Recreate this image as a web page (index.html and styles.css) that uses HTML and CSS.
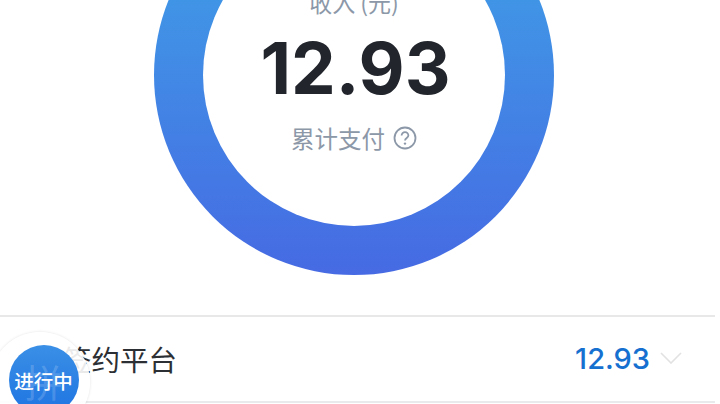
FILE: index.html
```html
<!DOCTYPE html>
<html lang="zh-CN">
<head>
    <meta charset="UTF-8">
    <title>收入</title>
    <link rel="stylesheet" href="styles.css">
</head>
<body>
    <div class="page">
        <section class="summary">
            <div class="ring">
                <div class="ring-inner">
                    <p class="ring-label">收入 (元)</p>
                    <p class="ring-value">12.93</p>
                    <p class="ring-note">累计支付
                        <svg class="help" viewBox="0 0 24 24" width="24" height="24">
                            <circle cx="12" cy="12" r="10.5" fill="none" stroke="#8c98a8" stroke-width="1.8"/>
                            <path d="M8.6 9.6a3.4 3.4 0 0 1 6.8 0c0 2.4-3.4 2.5-3.4 5" fill="none" stroke="#8c98a8" stroke-width="1.8"/>
                            <circle cx="12" cy="17.6" r="1.2" fill="#8c98a8"/>
                        </svg>
                    </p>
                </div>
            </div>
        </section>
        <div class="row">
            <span class="row-title">签约平台</span>
            <span class="row-value">12.93</span>
            <svg class="chevron" viewBox="0 0 22 12" width="22" height="12">
                <path d="M1 1l10 10L21 1" fill="none" stroke="#e2e2e2" stroke-width="1.6"/>
            </svg>
        </div>
    </div>
    <div class="float-badge">
        <div class="badge-circle">
            <span class="badge-mark">拼</span>
            <span class="badge-text">进行中</span>
        </div>
    </div>
</body>
</html>
```

FILE: styles.css
```css
html, body {
    margin: 0;
    padding: 0;
    height: 404px;
    overflow: hidden;
    background-color: #fff;
}

body {
    font-family: "Inter", "Roboto", "Noto Sans CJK SC", sans-serif;
    position: relative;
}

p {
    margin: 0;
}

.page {
    width: 715px;
}

.summary {
    display: flex;
    justify-content: center;
    height: 440px;
    margin-top: -125px;
}

.ring {
    width: 400px;
    height: 400px;
    margin-left: -7px;
    padding: 49px;
    box-sizing: border-box;
    border-radius: 50%;
    background: linear-gradient(180deg, #4095e6 30%, #466ae3 100%);
}

.ring-inner {
    width: 302px;
    height: 302px;
    box-sizing: border-box;
    border-radius: 50%;
    background-color: #fff;
    display: flex;
    flex-direction: column;
    align-items: center;
    padding-top: 62px;
}

.ring-label {
    font-family: "Noto Sans CJK SC", sans-serif;
    font-size: 23px;
    line-height: 32px;
    color: #8c98a8;
}

.ring-value {
    font-size: 71px;
    line-height: 84px;
    font-weight: 700;
    color: #22262c;
    margin-top: 8px;
    padding-left: 3px;
}

.ring-note {
    font-family: "Noto Sans CJK SC", sans-serif;
    font-size: 23.5px;
    line-height: 32px;
    color: #8c98a8;
    display: flex;
    align-items: center;
    gap: 8px;
    margin-top: 12px;
}

.row {
    display: flex;
    align-items: center;
    height: 88px;
    box-sizing: border-box;
    border-top: 2px solid #e8e8e8;
    border-bottom: 2px solid #e8eaec;
    padding-left: 63px;
    padding-bottom: 2px;
}

.row-title {
    font-family: "Noto Sans CJK SC", sans-serif;
    font-size: 28.5px;
    color: #2c2f33;
    flex: 1;
}

.row-value {
    font-size: 29px;
    font-weight: 500;
    color: #1670d0;
}

.chevron {
    margin: 0 33px 0 10px;
}

.float-badge {
    position: absolute;
    left: -10px;
    top: 332px;
    width: 100px;
    height: 100px;
    border-radius: 50%;
    background-color: rgba(255, 255, 255, 0.9);
    box-shadow: 0 0 3px rgba(0, 0, 0, 0.12);
    display: flex;
    align-items: center;
    justify-content: center;
}

.badge-circle {
    position: relative;
    width: 70px;
    height: 70px;
    margin-left: 7px;
    margin-top: -4px;
    border-radius: 50%;
    background: linear-gradient(180deg, #3a8fe6, #1f74e2);
    display: flex;
    align-items: center;
    justify-content: center;
    overflow: hidden;
}

.badge-mark {
    position: absolute;
    font-family: "Noto Sans CJK SC", sans-serif;
    font-size: 38px;
    color: rgba(255, 255, 255, 0.18);
}

.badge-text {
    position: relative;
    font-family: "Noto Sans CJK SC", sans-serif;
    font-size: 19.5px;
    font-weight: 500;
    white-space: nowrap;
    color: #fff;
}
```
